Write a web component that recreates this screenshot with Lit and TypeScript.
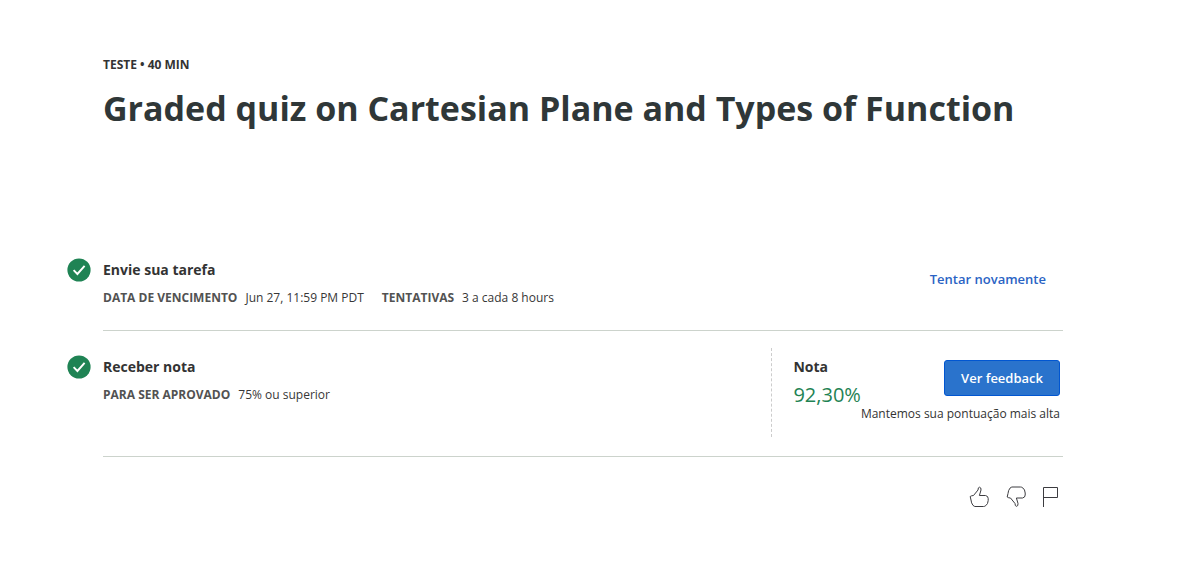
import { LitElement, html, css, svg } from "lit";
import { customElement } from "lit/decorators.js";

const check = html`<svg class="check" viewBox="0 0 24 24" width="24" height="24" aria-hidden="true">
  <circle cx="12" cy="12" r="11.6" fill="#1f8354" />
  <path d="M6.6 12.2 L10.4 16 L17.6 7.8" fill="none" stroke="#fff" stroke-width="1.9" />
</svg>`;

const icon = (width: number, shape: unknown) => html`<svg viewBox="0 0 ${width} 22" width=${width} height="22" fill="none" stroke="#3c3c40" stroke-width="1" aria-hidden="true">${shape}</svg>`;

const thumbUp = svg`<path d="M1.2 10.5 Q2.5 9.5 4.5 9.5 L9 4 Q9 1.2 10.5 1.2 Q12.3 1.4 12 4 L10.4 9.5 H16.5 Q19.2 10 19.2 12.5 V14.5 Q19 18 16.8 19.6 Q15.8 20.5 14.5 20.5 H5.8 L4 19.4 Q2.2 17 2 14 Z" />`;
const thumbDown = svg`<path d="M1.2 11 Q2.5 12 4.5 12 L9 17.5 Q9 20.3 10.5 20.3 Q12.3 20.1 12 17.5 L10.4 12 H16.5 Q19.2 11.5 19.2 9 V7 Q19 3.5 16.8 1.9 Q15.8 1 14.5 1 H5.8 L4 2.1 Q2.2 4.5 2 7.5 Z" />`;
const flag = svg`<path d="M0.5 21 V1.5 H14.5 V11.5 H0.5" />`;

@customElement("app-root")
export class AppRoot extends LitElement {
  static styles = css`
    :host {
      display: block;
      font-family: "Open Sans", "Noto Sans", sans-serif;
      font-size: 12px;
      line-height: 20px;
      color: #2d3436;
    }
    .page {
      max-width: 960px;
      padding: 55px 129px 60px 103px;
    }
    .kind {
      margin: 0;
      font-weight: 700;
      color: #333;
    }
    h1 {
      margin: 8px 0 0;
      font-size: 34px;
      line-height: 50px;
      font-weight: 700;
      color: #2f3738;
    }
    .steps {
      margin-top: 101px;
    }
    .step {
      display: flex;
      margin-left: -36px;
    }
    .check {
      flex: none;
      margin-top: 24px;
    }
    .body {
      flex: 1;
      display: flex;
      justify-content: space-between;
      min-width: 0;
      margin-left: 12px;
      border-bottom: 1px solid #ccd3cc;
    }
    .info {
      padding: 24px 0 22px;
    }
    h2 {
      margin: 0;
      font-size: 14px;
      line-height: 24px;
      font-weight: 700;
      color: #333;
    }
    dl {
      display: flex;
      flex-wrap: wrap;
      gap: 0 18px;
      margin: 6px 0 0;
    }
    .fact {
      display: flex;
      gap: 8px;
    }
    dt {
      font-weight: 700;
      color: #525252;
    }
    dd {
      margin: 0;
      color: #373737;
    }
    button {
      font: inherit;
      border: 0;
      padding: 0;
      background: none;
      cursor: pointer;
    }
    .retry {
      align-self: center;
      margin: 0 17px 6px 0;
      font-size: 13px;
      font-weight: 600;
      color: #2a63c4;
    }
    .grade {
      display: flex;
      margin: 17px 3px 19px 0;
      padding: 7px 0 13px 21px;
      border-left: 1px dashed #ccc;
    }
    .score {
      margin: 0;
      font-size: 20px;
      line-height: 32px;
      color: #1f8354;
    }
    .result {
      display: flex;
      flex-direction: column;
      align-items: flex-end;
      padding-top: 5px;
    }
    .feedback {
      box-sizing: border-box;
      height: 36px;
      padding: 0 16px;
      border: 1px solid #0156d1;
      border-radius: 3px;
      background: #2a73cc;
      color: #fff;
      font-size: 13px;
      font-weight: 600;
    }
    .note {
      margin: 8px 0 0;
      color: #333;
    }
    .actions {
      display: flex;
      justify-content: flex-end;
      gap: 17px;
      margin: 29px 3px 0 0;
    }
    .actions svg {
      display: block;
    }
  `;

  render() {
    return html`
      <main class="page">
        <p class="kind">TESTE • 40 MIN</p>
        <h1>Graded quiz on Cartesian Plane and Types of Function</h1>
        <div class="steps">
          <section class="step">
            ${check}
            <div class="body">
              <div class="info">
                <h2>Envie sua tarefa</h2>
                <dl>
                  <div class="fact"><dt>DATA DE VENCIMENTO</dt><dd>Jun 27, 11:59 PM PDT</dd></div>
                  <div class="fact"><dt>TENTATIVAS</dt><dd>3 a cada 8 hours</dd></div>
                </dl>
              </div>
              <button class="retry" type="button">Tentar novamente</button>
            </div>
          </section>
          <section class="step">
            ${check}
            <div class="body">
              <div class="info">
                <h2>Receber nota</h2>
                <dl>
                  <div class="fact"><dt>PARA SER APROVADO</dt><dd>75% ou superior</dd></div>
                </dl>
              </div>
              <div class="grade">
                <div>
                  <h2>Nota</h2>
                  <p class="score">92,30%</p>
                </div>
                <div class="result">
                  <button class="feedback" type="button">Ver feedback</button>
                  <p class="note">Mantemos sua pontuação mais alta</p>
                </div>
              </div>
            </div>
          </section>
        </div>
        <div class="actions">
          <button type="button" aria-label="Gostei">${icon(20, thumbUp)}</button>
          <button type="button" aria-label="Não gostei">${icon(20, thumbDown)}</button>
          <button type="button" aria-label="Denunciar">${icon(17, flag)}</button>
        </div>
      </main>
    `;
  }
}
